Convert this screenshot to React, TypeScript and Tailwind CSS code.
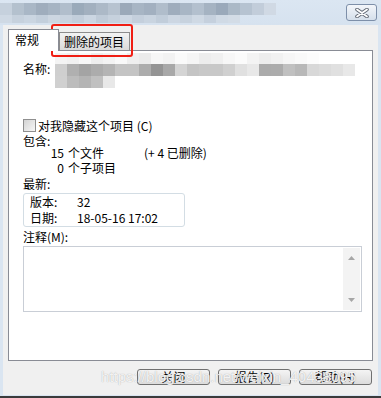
const titleTop = [
  "bg-[#c6d1dd]", "bg-[#b4c1ce]", "bg-[#a9b7c6]", "bg-[#9fadbd]", "bg-[#a6b4c3]",
  "bg-[#b1becc]", "bg-[#9aaaba]", "bg-[#a2b0bf]", "bg-[#acb9c7]", "bg-[#b7c3d0]",
  "bg-[#9ba9b9]", "bg-[#a7b5c4]", "bg-[#a2b0c0]", "bg-[#b0bdcb]", "bg-[#9fadbd]",
  "bg-[#a8b6c5]", "bg-[#b3c0ce]", "bg-[#a5b3c2]", "bg-[#9aa9ba]", "bg-[#abb9c7]",
  "bg-[#b6c3d1]", "bg-[#c2cdda]", "bg-[#d0d9e4]",
];

const titleBottom = [
  "bg-[#cfd9e4]", "bg-[#c6d1dd]", "bg-[#cad5e1]", "bg-[#c3cfdc]", "bg-[#ccd6e1]",
  "bg-[#c8d3df]", "bg-[#c2cedb]", "bg-[#cbd6e2]", "bg-[#bfcbd8]", "bg-[#c6d1dd]",
  "bg-[#cdd7e3]", "bg-[#c4cfdc]", "bg-[#c9d4e0]", "bg-[#c1cdda]", "bg-[#ccd6e2]",
  "bg-[#c7d2de]", "bg-[#cfd9e4]", "bg-[#c5d0dd]", "bg-[#d0dae5]", "bg-[#d3dce6]",
];

const nameTop = [
  "bg-[#f4f4f4]", "bg-[#f1f1f1]", "bg-[#f8f8f8]", "bg-[#eeeeee]", "bg-[#f3f3f3]",
  "bg-[#f9f9f9]", "bg-[#efefef]", "bg-[#ebebeb]", "bg-[#f6f6f6]", "bg-[#f2f2f2]",
  "bg-[#fafafa]", "bg-[#f5f5f5]", "bg-[#ededed]", "bg-[#f0f0f0]", "bg-[#f7f7f7]",
  "bg-[#fbfbfb]", "bg-[#f3f3f3]", "bg-[#ededed]", "bg-[#f1f1f1]", "bg-[#f6f6f6]",
  "bg-[#f9f9f9]", "bg-[#fcfcfc]",
];

const nameMid = [
  "bg-[#cfcfcf]", "bg-[#b0b0b0]", "bg-[#a4a4a4]", "bg-[#acacac]", "bg-[#b4b4b4]",
  "bg-[#c4c4c4]", "bg-[#c4c4c4]", "bg-[#acacac]", "bg-[#949494]", "bg-[#a8a8a8]",
  "bg-[#d4d4d4]", "bg-[#c4c4c4]", "bg-[#c8c8c8]", "bg-[#c8c8c8]", "bg-[#d0d0d0]",
  "bg-[#e0e0e0]", "bg-[#e8e8e8]", "bg-[#ababab]", "bg-[#acacac]", "bg-[#c0c0c0]",
  "bg-[#b8b8b8]", "bg-[#d8d8d8]", "bg-[#dcdcdc]", "bg-[#e0e0e0]", "bg-[#e8e8e8]",
];

const nameLow = ["bg-[#d0d0d0]", "bg-[#bcbcbc]", "bg-[#b4b4b4]", "bg-[#c0c0c0]", "bg-[#e8e8e8]"];

function Cells({ colors, height }: { colors: string[]; height: string }) {
  return (
    <div className="flex">
      {colors.map((c, i) => (
        <div key={i} className={`w-[12px] ${height} ${c}`} />
      ))}
    </div>
  );
}

function CloseButton() {
  return (
    <div className="flex h-[17px] w-[31px] items-center justify-center rounded-[3px] border border-[#7d8fa9] bg-gradient-to-b from-[#f3f6fa] to-[#d5dfeb]">
      <svg width="14" height="10" viewBox="0 0 14 10">
        <path d="M2 1.5 L12 8.5 M12 1.5 L2 8.5" stroke="#5f6672" strokeWidth="3.6" strokeLinecap="round" />
        <path d="M2 1.5 L12 8.5 M12 1.5 L2 8.5" stroke="#ffffff" strokeWidth="1.8" strokeLinecap="round" />
      </svg>
    </div>
  );
}

function Button({ label }: { label: string }) {
  return (
    <button className="flex h-[16px] w-[73px] items-center justify-center rounded-[3px] border border-[#707070] bg-gradient-to-b from-[#f4f4f4] to-[#dcdcdc] text-[12px] leading-[12px] text-black">
      {label}
    </button>
  );
}

export default function App() {
  return (
    <div className="relative flex h-[398px] w-[381px] flex-col overflow-hidden border-b-2 border-[#3b3b3b] bg-[#dae5f1] font-['Noto_Sans_CJK_SC',sans-serif] text-[12px] text-black">
      {/* title bar, title blurred out */}
      <div className="flex h-[25px] items-start justify-between bg-gradient-to-b from-[#dbe6f2] to-[#d6e2ef]">
        <div className="flex flex-col pt-[3px]">
          <Cells colors={titleTop} height="h-[12px]" />
          <Cells colors={titleBottom} height="h-[8px]" />
        </div>
        <div className="mr-[4px] mt-[4px]">
          <CloseButton />
        </div>
      </div>

      <div className="mx-[3px] mb-[1px] flex flex-1 flex-col bg-[#f0f0f0]">
        {/* tabs */}
        <div className="flex h-[25px] items-end pl-[5px]">
          <div className="relative z-10 -mb-px h-[22px] w-[51px] border border-b-0 border-[#898c95] bg-white pl-[6px] pt-[4px] leading-[12px]">
            常规
          </div>
          <div className="h-[18px] w-[71px] border border-b-0 border-[#8c8c8c] bg-gradient-to-b from-[#f3f3f3] to-[#dadada] pl-[4px] pt-[3px] leading-[12px]">
            删除的项目
          </div>
        </div>

        {/* panel */}
        <div className="ml-[5px] flex h-[311px] w-[365px] flex-col border border-[#898c95] bg-white pl-[14px] pt-[2px]">
          <div className="flex items-start">
            <div className="mt-[10px] w-[32px] leading-[12px]">名称:</div>
            <div className="flex flex-col">
              <Cells colors={nameTop} height="h-[11px]" />
              <Cells colors={nameMid} height="h-[12px]" />
              <Cells colors={nameLow} height="h-[12px]" />
            </div>
          </div>

          <div className="mt-[31px] flex h-[13px] items-center gap-[2px]">
            <div className="h-[13px] w-[13px] border border-[#8f8f8f] bg-gradient-to-br from-[#d4d4d4] to-[#f7f7f7]" />
            <span className="leading-[12px]">对我隐藏这个项目 (C)</span>
          </div>

          <div className="mt-[3px] h-[12px] leading-[12px]">包含:</div>
          <div className="flex h-[12px] leading-[12px]">
            <span className="w-[41px] text-right">15</span>
            <span className="ml-[4px] w-[76px]">个文件</span>
            <span>(+ 4 已删除)</span>
          </div>
          <div className="mt-[3px] flex h-[12px] leading-[12px]">
            <span className="w-[41px] text-right">0</span>
            <span className="ml-[4px]">个子项目</span>
          </div>
          <div className="mt-[4px] h-[12px] leading-[12px]">最新:</div>

          <div className="mt-[3px] flex h-[34px] w-[162px] flex-col rounded-[3px] border border-[#d3dde4] pl-[6px] pt-[2px]">
            <div className="flex h-[12px] leading-[12px]">
              <span className="w-[47px]">版本:</span>
              <span>32</span>
            </div>
            <div className="mt-[4px] flex h-[12px] leading-[12px]">
              <span className="w-[47px]">日期:</span>
              <span>18-05-16 17:02</span>
            </div>
          </div>

          <div className="mt-[4px] h-[12px] leading-[12px]">注释(M):</div>
          <div className="mt-[3px] flex h-[66px] w-[339px] justify-end border border-[#c9ced6] p-px">
            <div className="flex w-[17px] flex-col items-center justify-between bg-[#f3f3f3] py-[8px]">
              <svg width="7" height="4" viewBox="0 0 7 4">
                <path d="M0 4 L3.5 0 L7 4 Z" fill="#a6a6a6" />
              </svg>
              <svg width="7" height="4" viewBox="0 0 7 4">
                <path d="M0 0 L3.5 4 L7 0 Z" fill="#a6a6a6" />
              </svg>
            </div>
          </div>
        </div>

        {/* buttons */}
        <div className="mt-[8px] flex justify-end gap-[8px] pr-[6px]">
          <Button label="关闭" />
          <Button label="报告(R)" />
          <Button label="帮助(H)" />
        </div>
      </div>

      {/* highlight box drawn over the second tab */}
      <div className="absolute left-[51px] top-[24px] h-[33px] w-[82px] rounded-[3px] border-2 border-[#f01e14]" />

      {/* watermark */}
      <div className="absolute left-[101px] top-[368px] font-['Liberation_Sans',sans-serif] text-[15px] leading-[18px] text-white/85 [text-shadow:0_0_1px_#9c9c9c]">
        https://blog.csdn.net/weixin_40438095
      </div>
    </div>
  );
}
